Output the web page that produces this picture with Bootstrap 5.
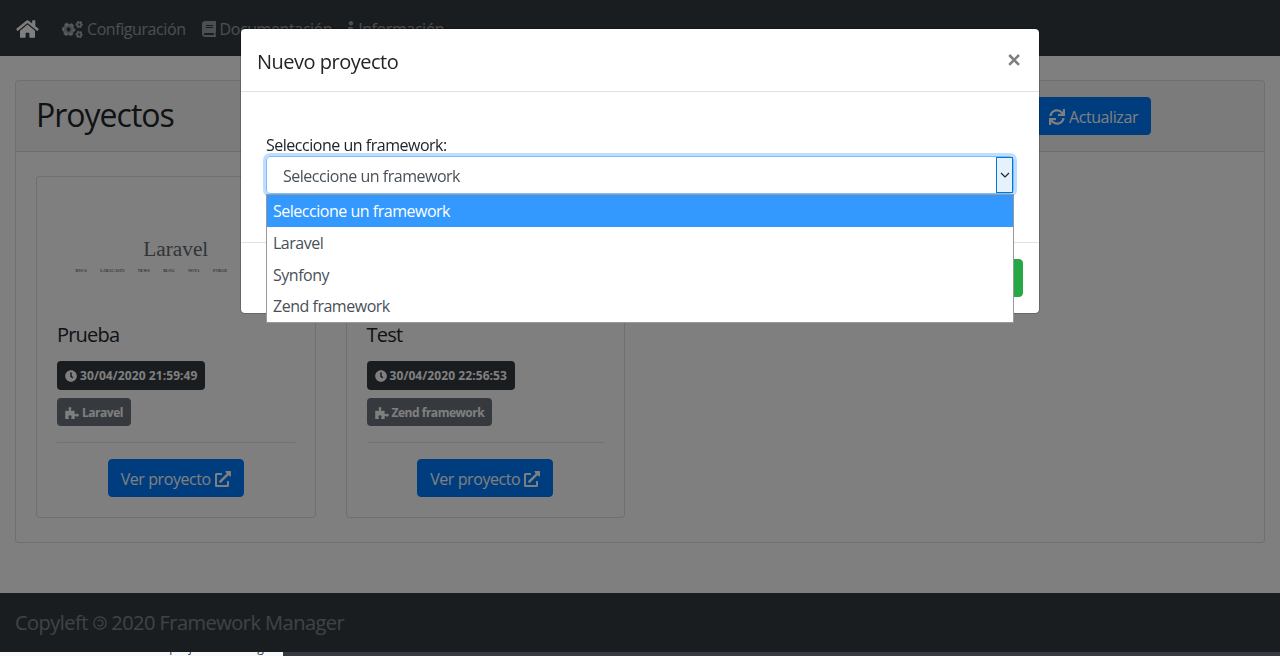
<!DOCTYPE html>
<html lang="es">
<head>
<meta charset="utf-8">
<meta name="viewport" content="width=device-width, initial-scale=1">
<title>Framework Manager</title>
<link rel="stylesheet" href="https://cdn.jsdelivr.net/npm/bootstrap@5.3.0/dist/css/bootstrap.min.css">
<style>
body{font-family:"Open Sans","Noto Sans",sans-serif;font-size:16px;color:#212529;letter-spacing:-.42px;height:656px;overflow:hidden;--bs-border-radius:4px}
svg{fill:currentColor;flex:none}
.topbar{height:56px;background:#343a40;padding:2px 16px 0}
.topbar a{color:rgba(255,255,255,.5);text-decoration:none}
.topbar .home{color:#fff;margin-right:-1px}
.page{padding:24px 15px 0;height:537px}
.card{border-color:rgba(0,0,0,.125);border-radius:4px}
.panel{height:463px}
.panel>.card-header{height:71px;padding:0 20px;background:rgba(0,0,0,.03);border-color:rgba(0,0,0,.125)}
.panel h2{font-size:32px;font-weight:400;letter-spacing:-1px;margin-top:-2px}
.btn{border-radius:4px;letter-spacing:-.42px;height:38px;padding:7px 12px 5px}
.btn-primary{--bs-btn-bg:#007bff;--bs-btn-border-color:#007bff}
.update{margin-right:93px}
.panel>.card-body{padding:24px 20px}
.grid{--bs-gutter-x:30px}
.proj{height:342px}
.thumb{height:127px;padding-top:57px;text-align:center;font-family:"Liberation Serif",serif;color:#636b6f;letter-spacing:0}
.thumb .brand{font-size:21.3px;line-height:30px}
.thumb .links{font-size:4px;font-weight:700;line-height:6px;letter-spacing:0;margin:4px 0 0 8px;gap:13.5px;white-space:nowrap}
.proj .card-body{padding:20px}
.proj h5{font-size:20px;font-weight:400;line-height:24px;letter-spacing:-.8px;margin:-1px 0 14px}
.tag{display:inline-flex;align-items:center;gap:3px;height:29px;padding:0 8px;border-radius:4px;color:#fff;font-size:12px;font-weight:700;letter-spacing:.08px}
.tag-dark{background:#343a40}
.tag-gray{background:#6c757d;height:28px;margin-top:8px;padding-top:1px;letter-spacing:-.48px}
.proj hr{margin:16px 0;border-color:rgba(0,0,0,.1);opacity:1}
.foot{height:63px;background:#343a40;color:rgba(255,255,255,.4);padding:0 15px 3px;font-size:20px;letter-spacing:-.52px}
.foot svg{fill:none}
.shade{position:fixed;inset:0 0 4px 0;background:rgba(0,0,0,.5);z-index:10}
.layer{position:fixed;inset:0;z-index:20;padding-top:28px}
.dlg{width:800px;height:286px;background:#fff;border:1px solid rgba(0,0,0,.2);background-clip:padding-box;border-radius:5px;margin:0 auto}
.dlg header{height:63px;border-bottom:1px solid #dee2e6;padding:3px 18px 0 16px;font-size:20px;letter-spacing:-.5px}
.dlg header svg{margin-top:-3px}
.dlg .content{height:150px;padding:41px 25px 0;letter-spacing:-.48px}
.dlg .content label{display:block;height:23px;line-height:24px}
.dlg footer{border-top:1px solid #dee2e6;padding:16px}
.btn-success{--bs-btn-bg:#28a745;--bs-btn-border-color:#28a745}
.picker{position:relative;height:38px;border:1px solid #80bdff;border-radius:4px;box-shadow:0 0 0 3px #bfdeff;color:#495057;padding:2px 0 0 16px;display:flex;align-items:center}
.arrow{position:absolute;right:0;top:0;width:17px;height:36px;border:1px solid #0078d7;background:#e5f1fb;color:#222}
.arrow svg{fill:none}
.opts{position:absolute;left:-1px;right:-1px;top:37px;border:1px solid #999;background:#fff;height:129px;z-index:3}
.opts div{height:32px;line-height:33px;padding-left:6px}
.opts div:last-child{height:31px;line-height:31px}
.opts .on{background:#39f;color:#fff}
.strip{position:fixed;left:0;right:0;bottom:0;height:4px;background:#363a41;z-index:9}
.strip div{width:283px;height:4px;overflow:hidden;background:#f9f9f9;color:#333a60;font-size:12px;line-height:16px;padding-left:4px;letter-spacing:0}
.strip span{display:block;margin-top:-12px;white-space:nowrap}
</style>
</head>
<body>
<svg width="0" height="0" class="position-absolute">
<symbol id="home" viewBox="0 0 576 512"><path d="M280.37 148.26L96 300.11V464a16 16 0 0 0 16 16l112.06-.29a16 16 0 0 0 15.92-16V368a16 16 0 0 1 16-16h64a16 16 0 0 1 16 16v95.64a16 16 0 0 0 16 16.05L464 480a16 16 0 0 0 16-16V300L295.67 148.26a12.19 12.19 0 0 0-15.3 0zM571.6 251.47L488 182.56V44.05a12 12 0 0 0-12-12h-56a12 12 0 0 0-12 12v72.61L318.47 43a48 48 0 0 0-61 0L4.34 251.47a12 12 0 0 0-1.6 16.9l25.5 31A12 12 0 0 0 45.15 301l235.22-193.74a12.19 12.19 0 0 1 15.3 0L530.9 301a12 12 0 0 0 16.9-1.6l25.5-31a12 12 0 0 0-1.7-16.93z"/></symbol>
<symbol id="cogs" viewBox="0 0 640 512"><g fill="none" stroke="currentColor"><circle cx="200" cy="256" r="120" stroke-width="110"/><circle cx="200" cy="256" r="180" stroke-width="62" stroke-dasharray="110 78.5" stroke-dashoffset="55"/><circle cx="524" cy="106" r="62" stroke-width="58"/><circle cx="524" cy="106" r="94" stroke-width="36" stroke-dasharray="58 40.4" stroke-dashoffset="29"/><circle cx="524" cy="406" r="62" stroke-width="58"/><circle cx="524" cy="406" r="94" stroke-width="36" stroke-dasharray="58 40.4" stroke-dashoffset="29"/></g></symbol>
<symbol id="book" viewBox="0 0 448 512"><path d="M448 360V24c0-13.3-10.7-24-24-24H96C43 0 0 43 0 96v320c0 53 43 96 96 96h328c13.3 0 24-10.7 24-24v-16c0-7.5-3.5-14.3-8.9-18.7-4.2-15.4-4.2-59.3 0-74.7 5.4-4.3 8.9-11.1 8.9-18.6zM128 134c0-3.3 2.7-6 6-6h212c3.3 0 6 2.7 6 6v20c0 3.3-2.7 6-6 6H134c-3.3 0-6-2.7-6-6v-20zm0 64c0-3.3 2.7-6 6-6h212c3.3 0 6 2.7 6 6v20c0 3.3-2.7 6-6 6H134c-3.3 0-6-2.7-6-6v-20zm253.4 250H96c-17.7 0-32-14.3-32-32 0-17.6 14.4-32 32-32h285.4c-1.9 17.1-1.9 46.9 0 64z"/></symbol>
<symbol id="info" viewBox="0 0 192 512"><path d="M20 424.229h20V279.771H20c-11.046 0-20-8.954-20-20V212c0-11.046 8.954-20 20-20h112c11.046 0 20 8.954 20 20v212.229h20c11.046 0 20 8.954 20 20V492c0 11.046-8.954 20-20 20H20c-11.046 0-20-8.954-20-20v-47.771c0-11.046 8.954-20 20-20zM96 0C56.235 0 24 32.235 24 72s32.235 72 72 72 72-32.235 72-72S135.764 0 96 0z"/></symbol>
<symbol id="sync" viewBox="0 0 512 512"><path d="M440.65 12.57l4 82.77A247.16 247.16 0 0 0 255.83 8C134.73 8 33.91 94.92 12.29 209.82A12 12 0 0 0 24.09 224h49.05a12 12 0 0 0 11.67-9.26 175.91 175.91 0 0 1 317-56.94l-101.46-4.86a12 12 0 0 0-12.57 12v47.41a12 12 0 0 0 12 12H500a12 12 0 0 0 12-12V12a12 12 0 0 0-12-12h-47.37a12 12 0 0 0-11.98 12.57zM255.83 432a175.61 175.61 0 0 1-146-77.8l101.8 4.87a12 12 0 0 0 12.57-12v-47.4a12 12 0 0 0-12-12H12a12 12 0 0 0-12 12V500a12 12 0 0 0 12 12h47.35a12 12 0 0 0 12-12.6l-4.15-82.57A247.17 247.17 0 0 0 255.83 504c121.11 0 221.93-86.92 243.55-201.82a12 12 0 0 0-11.8-14.18h-49.05a12 12 0 0 0-11.67 9.26A175.86 175.86 0 0 1 255.83 432z"/></symbol>
<symbol id="clock" viewBox="0 0 512 512"><path d="M256,8C119,8,8,119,8,256S119,504,256,504,504,393,504,256,393,8,256,8Zm92.49,313h0l-20,25a16,16,0,0,1-22.49,2.5h0l-67-49.72a40,40,0,0,1-15-31.23V112a16,16,0,0,1,16-16h32a16,16,0,0,1,16,16V256l58,42.5A16,16,0,0,1,348.49,321Z"/></symbol>
<symbol id="puzzle" viewBox="0 0 576 512"><path d="M0 160h128c28 0 45-12 32-40-35-62-15-120 42-120 58 0 76 58 43 118-15 29 2 42 31 42h124v120c0 28 14 42 44 27 62-34 132-18 132 41 0 60-70 76-132 43-30-15-44-1-44 27v94H268c-22 0-22-22-11-42 32-58 10-118-53-118s-85 60-53 118c11 20 11 42-11 42H0z"/></symbol>
<symbol id="ext" viewBox="0 0 512 512"><path d="M432,320H400a16,16,0,0,0-16,16V448H64V128H208a16,16,0,0,0,16-16V80a16,16,0,0,0-16-16H48A48,48,0,0,0,0,112V464a48,48,0,0,0,48,48H400a48,48,0,0,0,48-48V336A16,16,0,0,0,432,320ZM488,0h-128c-21.37,0-32.05,25.91-17,41l35.73,35.73L135,320.37a24,24,0,0,0,0,34L157.67,377a24,24,0,0,0,34,0L435.28,133.32,471,169c15,15,41,4.5,41-17V24A24,24,0,0,0,488,0Z"/></symbol>
</svg>

<nav class="topbar d-flex align-items-center">
  <a class="home d-flex" href="#"><svg width="23" height="20"><use href="#home"/></svg></a>
  <a class="d-flex align-items-center ms-4" href="#"><svg width="21" height="17" class="me-1"><use href="#cogs"/></svg><span>Configuración</span></a>
  <a class="d-flex align-items-center ms-3" href="#"><svg width="14" height="16" class="me-1"><use href="#book"/></svg><span>Documentación</span></a>
  <a class="d-flex align-items-center ms-3" href="#"><svg width="6" height="16" class="me-1"><use href="#info"/></svg><span>Información</span></a>
</nav>

<main class="page">
  <section class="card panel">
    <div class="card-header d-flex align-items-center justify-content-between">
      <h2 class="mb-0">Proyectos</h2>
      <button class="btn btn-primary update d-flex align-items-center gap-1"><svg width="16" height="16"><use href="#sync"/></svg>Actualizar</button>
    </div>
    <div class="card-body">
      <div class="row grid">
        <div class="col-3">
          <div class="card proj">
            <div class="thumb"><div class="brand">Laravel</div><div class="links d-flex justify-content-center"><span>DOCS</span><span>LARACASTS</span><span>NEWS</span><span>BLOG</span><span>NOVA</span><span>FORGE</span><span>VAPOR</span><span>GITHUB</span></div></div>
            <div class="card-body">
              <h5>Prueba</h5>
              <div class="tag tag-dark"><svg width="12" height="12"><use href="#clock"/></svg>30/04/2020 21:59:49</div>
              <div class="d-flex"><div class="tag tag-gray"><svg width="14" height="12"><use href="#puzzle"/></svg>Laravel</div></div>
              <hr>
              <div class="text-center"><button class="btn btn-primary d-inline-flex align-items-center gap-1">Ver proyecto <svg width="16" height="16"><use href="#ext"/></svg></button></div>
            </div>
          </div>
        </div>
        <div class="col-3">
          <div class="card proj">
            <div class="thumb"></div>
            <div class="card-body">
              <h5>Test</h5>
              <div class="tag tag-dark"><svg width="12" height="12"><use href="#clock"/></svg>30/04/2020 22:56:53</div>
              <div class="d-flex"><div class="tag tag-gray"><svg width="14" height="12"><use href="#puzzle"/></svg>Zend framework</div></div>
              <hr>
              <div class="text-center"><button class="btn btn-primary d-inline-flex align-items-center gap-1">Ver proyecto <svg width="16" height="16"><use href="#ext"/></svg></button></div>
            </div>
          </div>
        </div>
      </div>
    </div>
  </section>
</main>

<footer class="foot d-flex align-items-center">Copyleft&nbsp;<svg width="14" height="14" viewBox="0 0 14 14" stroke="currentColor" stroke-width="1.2"><circle cx="7" cy="7" r="6.2"/><path d="M4.6 5.2a3 3 0 1 1 0 3.6"/></svg>&nbsp;2020 Framework Manager</footer>

<div class="strip"><div><span>localhost/framework-admins/project/es/config</span></div></div>
<div class="shade"></div>

<div class="layer">
  <div class="dlg">
    <header class="d-flex align-items-center justify-content-between"><span>Nuevo proyecto</span>
      <svg width="14" height="14" viewBox="0 0 14 14" stroke="#7f7f7f" stroke-width="2.6"><path d="M2.2 2 12 11.8M12 2 2.2 11.8"/></svg></header>
    <div class="content">
      <label>Seleccione un framework:</label>
      <div class="picker">Seleccione un framework
        <span class="arrow d-flex align-items-center justify-content-center"><svg width="10" height="6" viewBox="0 0 10 6" stroke="currentColor" stroke-width="1.2"><path d="M1 1 5 5 9 1"/></svg></span>
        <div class="opts"><div class="on">Seleccione un framework</div><div>Laravel</div><div>Synfony</div><div>Zend framework</div></div>
      </div>
    </div>
    <footer class="text-end"><button class="btn btn-success">Guardar</button></footer>
  </div>
</div>
<script src="https://cdn.jsdelivr.net/npm/bootstrap@5.3.0/dist/js/bootstrap.bundle.min.js"></script>
</body>
</html>
